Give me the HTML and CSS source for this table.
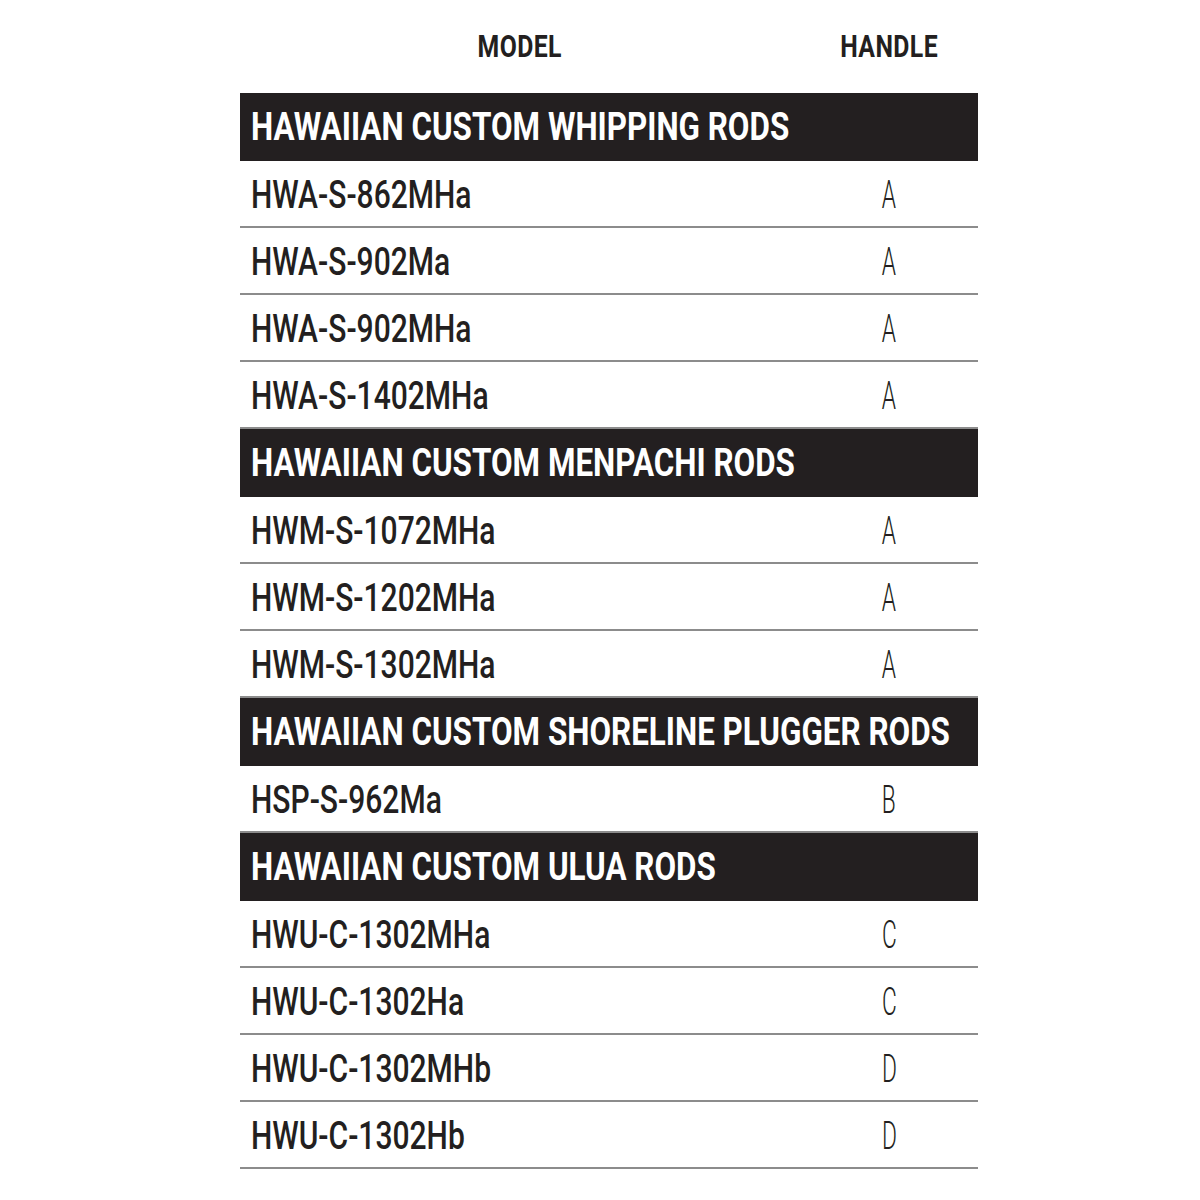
FILE: index.html
```html
<!DOCTYPE html>
<html lang="en">
<head>
<meta charset="utf-8">
<title>Hawaiian Custom Rods</title>
<link rel="stylesheet" href="styles.css">
</head>
<body>
<div class="sheet">
  <div class="colhead">
    <div class="col-model"><span class="head-text">MODEL</span></div>
    <div class="col-handle"><span class="head-text">HANDLE</span></div>
  </div>

  <section class="group">
    <h2 class="bar"><span class="bar-text">HAWAIIAN CUSTOM WHIPPING RODS</span></h2>
    <div class="row"><span class="model">HWA-S-862MHa</span><span class="handle"><span class="letter">A</span></span></div>
    <div class="row"><span class="model">HWA-S-902Ma</span><span class="handle"><span class="letter">A</span></span></div>
    <div class="row"><span class="model">HWA-S-902MHa</span><span class="handle"><span class="letter">A</span></span></div>
    <div class="row"><span class="model">HWA-S-1402MHa</span><span class="handle"><span class="letter">A</span></span></div>
  </section>

  <section class="group">
    <h2 class="bar"><span class="bar-text">HAWAIIAN CUSTOM MENPACHI RODS</span></h2>
    <div class="row"><span class="model">HWM-S-1072MHa</span><span class="handle"><span class="letter">A</span></span></div>
    <div class="row"><span class="model">HWM-S-1202MHa</span><span class="handle"><span class="letter">A</span></span></div>
    <div class="row"><span class="model">HWM-S-1302MHa</span><span class="handle"><span class="letter">A</span></span></div>
  </section>

  <section class="group">
    <h2 class="bar"><span class="bar-text">HAWAIIAN CUSTOM SHORELINE PLUGGER RODS</span></h2>
    <div class="row"><span class="model">HSP-S-962Ma</span><span class="handle"><span class="letter">B</span></span></div>
  </section>

  <section class="group">
    <h2 class="bar"><span class="bar-text">HAWAIIAN CUSTOM ULUA RODS</span></h2>
    <div class="row"><span class="model">HWU-C-1302MHa</span><span class="handle"><span class="letter">C</span></span></div>
    <div class="row"><span class="model">HWU-C-1302Ha</span><span class="handle"><span class="letter">C</span></span></div>
    <div class="row"><span class="model">HWU-C-1302MHb</span><span class="handle"><span class="letter">D</span></span></div>
    <div class="row"><span class="model">HWU-C-1302Hb</span><span class="handle"><span class="letter">D</span></span></div>
  </section>
</div>
</body>
</html>
```

FILE: styles.css
```css
html, body {
  margin: 0;
  padding: 0;
  background: #ffffff;
}

body {
  font-family: Roboto, "Liberation Sans", sans-serif;
  color: #231f20;
}

.sheet {
  width: 738px;
  margin-left: 240px;
}

.colhead {
  display: grid;
  grid-template-columns: 560px 178px;
  padding-top: 32px;
  margin-bottom: 31px;
  font-weight: 700;
  font-size: 31px;
  line-height: 30px;
  letter-spacing: 0.5px;
}

.col-model,
.col-handle {
  text-align: center;
  white-space: nowrap;
}

.head-text {
  display: inline-block;
  transform: scaleX(0.8);
  transform-origin: center;
}

.group {
  margin: 0;
}

.bar {
  margin: 0;
  height: 68px;
  box-sizing: border-box;
  padding-left: 11px;
  background: #231f20;
  color: #ffffff;
  font-size: 39px;
  line-height: 68px;
  font-weight: 700;
  white-space: nowrap;
  overflow: hidden;
}

.bar-text {
  display: inline-block;
  transform: scaleX(0.805);
  transform-origin: left center;
}

.row {
  display: grid;
  grid-template-columns: 549px 178px;
  height: 67px;
  box-sizing: border-box;
  padding: 4px 0 0 11px;
  border-bottom: 2px solid #8c8c8c;
  font-size: 38px;
  line-height: 61px;
  white-space: nowrap;
}

.model {
  font-weight: 500;
  transform: scaleX(0.79);
  transform-origin: left center;
}

.handle {
  text-align: center;
}

.letter {
  display: inline-block;
  font-weight: 300;
  transform: scaleX(0.6);
  transform-origin: center;
}
```
